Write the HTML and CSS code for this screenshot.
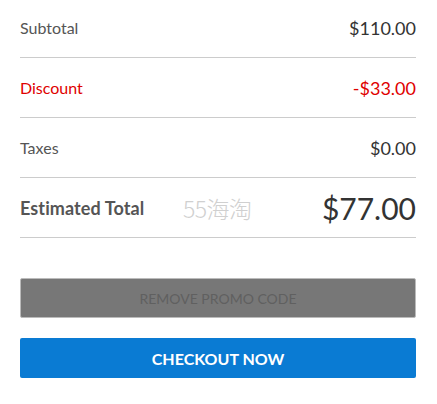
FILE: index.html
```html
<!DOCTYPE html>
<html>
<head>
<meta charset="utf-8">
<link rel="stylesheet" href="styles.css">
</head>
<body>
<div class="summary">
  <div class="rows">
    <div class="row">
      <span class="label">Subtotal</span>
      <span class="value">$110.00</span>
    </div>
    <div class="row discount">
      <span class="label">Discount</span>
      <span class="value">-$33.00</span>
    </div>
    <div class="row">
      <span class="label">Taxes</span>
      <span class="value">$0.00</span>
    </div>
    <div class="row total">
      <span class="label">Estimated Total</span>
      <span class="watermark">55海淘</span>
      <span class="value">$77.00</span>
    </div>
  </div>
  <div class="actions">
    <button class="btn btn-remove" disabled>REMOVE PROMO CODE</button>
    <button class="btn btn-checkout">CHECKOUT NOW</button>
  </div>
</div>
</body>
</html>
```
FILE: styles.css
```css
html, body {
  margin: 0;
  padding: 0;
  background: #fff;
}
body {
  font-family: Lato, "Noto Sans", sans-serif;
}
.summary {
  padding: 0 21px 0 20px;
}
.rows {
  margin-top: -2px;
}
.row {
  position: relative;
  display: flex;
  align-items: center;
  justify-content: space-between;
  height: 59px;
  border-bottom: 1px solid #ccc;
}
.label {
  font-size: 16px;
  color: #555;
}
.value {
  font-size: 18px;
  color: #333;
}
.discount .label,
.discount .value {
  color: #e00000;
}
.total .label {
  font-weight: bold;
  font-size: 18px;
  letter-spacing: 0.1px;
  color: #555;
}
.total .value {
  font-size: 30px;
}
.watermark {
  position: absolute;
  left: 163px;
  top: 13px;
  font-family: "Noto Sans CJK SC", sans-serif;
  font-weight: 300;
  font-size: 23px;
  color: #d0d0d0;
  letter-spacing: -0.5px;
}
.actions {
  display: flex;
  flex-direction: column;
  gap: 20px;
  margin-top: 40px;
}
.btn {
  display: block;
  width: 100%;
  height: 40px;
  border-radius: 2px;
  font-family: Lato, "Noto Sans", sans-serif;
  text-transform: uppercase;
  cursor: pointer;
}
.btn-remove {
  background: #777;
  border: 1px solid #bbb;
  color: #606060;
  font-size: 14px;
}
.btn-checkout {
  background: #0a7bd3;
  border: none;
  color: #fff;
  font-weight: bold;
  font-size: 16px;
}
```
